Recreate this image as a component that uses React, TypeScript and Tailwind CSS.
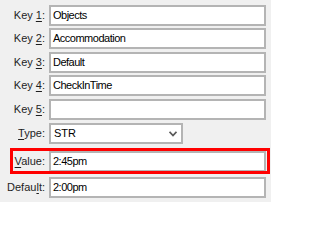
import React from "react";

// ─── FIELD ROW ───────────────────────────────────────────────────────────────

function Label({ pre, hot, post }: { pre: string; hot: string; post: string }) {
  return (
    <span className="w-[49px] shrink-0 pr-[4px] text-right text-[11px] text-[#1e1e1e] whitespace-nowrap">
      {pre}
      <span className="underline underline-offset-[2px]">{hot}</span>
      {post}
    </span>
  );
}

function TextBox({ value }: { value: string }) {
  return (
    <div className="flex h-[21px] flex-1 items-center border-2 border-[#b4b4b4] bg-white pl-[2px] text-[11px] tracking-[-0.5px] text-black">
      {value}
    </div>
  );
}

const KEYS = [
  { n: "1", value: "Objects", mt: "mt-[5px]" },
  { n: "2", value: "Accommodation", mt: "mt-[2px]" },
  { n: "3", value: "Default", mt: "mt-[3px]" },
  { n: "4", value: "CheckInTime", mt: "mt-[2px]" },
  { n: "5", value: "", mt: "mt-[3px]" },
];

// ─── COMPONENT ───────────────────────────────────────────────────────────────

export default function App() {
  return (
    <div
      className="flex h-[202px] w-[271px] flex-col bg-[#f0f0f0] pr-[5px]"
      style={{ fontFamily: '"Liberation Sans", Arial, sans-serif' }}
    >
      {KEYS.map(k => (
        <div key={k.n} className={`flex items-center ${k.mt}`}>
          <Label pre="Key " hot={k.n} post=":" />
          <TextBox value={k.value} />
        </div>
      ))}

      {/* Type dropdown */}
      <div className="mt-[3px] flex items-center">
        <Label pre="" hot="T" post="ype:" />
        <div className="flex h-[21px] w-[134px] items-center justify-between border-2 border-[#b4b4b4] bg-white pl-[3px] pr-[4px] text-[11px] text-black">
          <span>STR</span>
          <svg width="8" height="6" viewBox="0 0 8 6" className="text-[#5a5a5a]">
            <path d="M0.5 0.8 L4 4.5 L7.5 0.8" fill="none" stroke="currentColor" strokeWidth="1.8" />
          </svg>
        </div>
      </div>

      {/* Value, highlighted */}
      <div className="relative mt-[7px] flex items-center">
        <Label pre="" hot="V" post="alue:" />
        <TextBox value="2:45pm" />
        <div className="pointer-events-none absolute -top-[3px] -bottom-[2px] left-[10px] -right-[4px] border-[3px] border-[#ff0000]" />
      </div>

      {/* Default */}
      <div className="mt-[5px] flex items-center">
        <Label pre="Defau" hot="l" post="t:" />
        <TextBox value="2:00pm" />
      </div>
    </div>
  );
}
